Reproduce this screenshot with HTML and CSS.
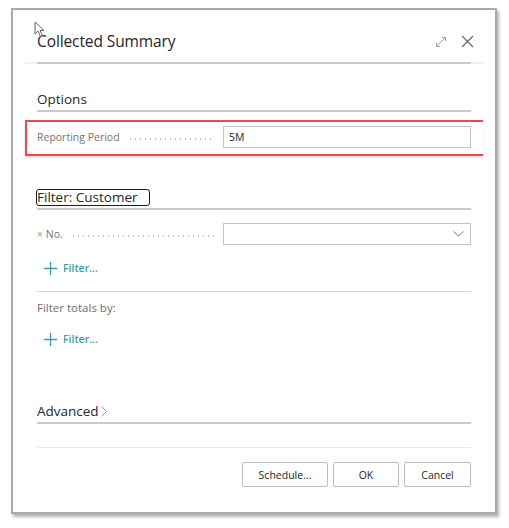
FILE: index.html
```html
<!DOCTYPE html>
<html lang="en">
<head>
<meta charset="utf-8">
<title>Collected Summary</title>
<link rel="stylesheet" href="styles.css">
</head>
<body>
<div class="dialog">
  <svg class="cursor" width="12" height="17" viewBox="0 0 12 17"><path d="M1 1 L1 13 L4 10 L6.5 15.5 L8.5 14.5 L6 9.5 L10 9.5 Z" fill="#fff" stroke="#666" stroke-width="1"/></svg>
  <div class="header">
    <h1 class="title">Collected Summary</h1>
    <div class="header-icons">
      <svg class="icon-expand" width="12" height="12" viewBox="0 0 12 12"><path d="M1.5 10.5 L10.5 1.5 M7 1.5 H10.5 V5 M1.5 7 V10.5 H5" fill="none" stroke="#a0a0a0" stroke-width="1"/></svg>
      <svg class="icon-close" width="13" height="13" viewBox="0 0 13 13"><path d="M1 1 L12 12 M12 1 L1 12" fill="none" stroke="#666" stroke-width="1.2"/></svg>
    </div>
  </div>
  <div class="header-rule"><div class="header-rule-inner"></div></div>

  <div class="content">
    <div class="section-head">Options</div>
    <div class="highlight">
      <div class="field-row">
        <div class="field-label"><span>Reporting Period</span><span class="leader"></span></div>
        <div class="input"><span class="input-value">5M</span></div>
      </div>
    </div>

    <div class="section-head section-filter"><span class="focus-box">Filter: Customer</span></div>
    <div class="field-row row-no">
      <div class="field-label"><span><span class="x-mark">×</span> No.</span><span class="leader"></span></div>
      <div class="input input-select">
        <svg class="chevron" width="11" height="6" viewBox="0 0 11 6"><path d="M0.5 0.5 L5.5 5 L10.5 0.5" fill="none" stroke="#777" stroke-width="1"/></svg>
      </div>
    </div>
    <div class="add-filter filter-1">
      <svg width="13" height="13" viewBox="0 0 13 13"><path d="M6.5 0 V13 M0 6.5 H13" stroke="#3a9e9e" stroke-width="1.3"/></svg>
      <span>Filter...</span>
    </div>
    <div class="sep"></div>
    <div class="totals-label">Filter totals by:</div>
    <div class="add-filter filter-2">
      <svg width="13" height="13" viewBox="0 0 13 13"><path d="M6.5 0 V13 M0 6.5 H13" stroke="#3a9e9e" stroke-width="1.3"/></svg>
      <span>Filter...</span>
    </div>

    <div class="section-head section-advanced">Advanced<svg class="adv-chevron" width="6" height="11" viewBox="0 0 6 11"><path d="M0.5 0.5 L5.5 5.5 L0.5 10.5" fill="none" stroke="#9a9a9a" stroke-width="1"/></svg></div>
    <div class="sep sep-light"></div>

    <div class="buttons">
      <button class="btn btn-schedule">Schedule...</button>
      <button class="btn btn-ok">OK</button>
      <button class="btn btn-cancel">Cancel</button>
    </div>
  </div>
</div>
</body>
</html>
```

FILE: styles.css
```css
* { box-sizing: border-box; }
html, body { margin: 0; padding: 0; background: #fff; }
body {
  width: 509px;
  height: 528px;
  overflow: hidden;
  font-family: "Open Sans", "Noto Sans", sans-serif;
  color: #212121;
}
.dialog {
  position: relative;
  margin: 8px 0 0 11px;
  width: 486px;
  border: 2px solid #a9a9a9;
  background: #fff;
  box-shadow: 2px 3px 3px rgba(0,0,0,0.3);
  padding-bottom: 25px;
}
.cursor { position: absolute; left: 21px; top: 11px; }
.header {
  display: flex;
  align-items: center;
  justify-content: space-between;
  padding: 20px 21px 0 24px;
  height: 42px;
}
.title {
  margin: 0;
  font-size: 15.5px;
  font-weight: 400;
  line-height: 22px;
  color: #262626;
  letter-spacing: -0.1px;
}
.header-icons { display: flex; align-items: center; gap: 14px; margin-top: 1px; }
.header-rule {
  margin: 10px 12px 0 12px;
  height: 2px;
  background: #efefef;
  padding: 0 12px;
}
.header-rule-inner { height: 2px; background: #c6c9cf; }
.content { padding: 0 24px; }
.section-head {
  font-size: 13.5px;
  line-height: 22px;
  color: #262626;
  border-bottom: 2px solid #c6c9cf;
  margin-top: 24px;
}
.highlight {
  margin: 8px -12px 0 -12px;
  border: 2px solid #ec4a4f;
  border-right: none;
  padding: 4px 12px 6px 10px;
  box-shadow: 0 2px 2px rgba(0,0,0,0.12);
}
.field-row { display: flex; align-items: center; }
.field-label {
  width: 186px;
  display: flex;
  align-items: center;
  font-size: 10.5px;
  color: #737373;
  white-space: nowrap;
}
.leader {
  flex: 1;
  height: 2px;
  margin: 4px 8px 0 8px;
  background-image: radial-gradient(circle, #bdbdbd 0.8px, transparent 1px);
  background-size: 5px 2px;
  background-repeat: repeat-x;
}
.input {
  flex: 1;
  height: 22px;
  border: 1px solid #c2c5ca;
  display: flex;
  align-items: center;
  padding-left: 5px;
}
.input-value { font-size: 10.5px; color: #222; }
.section-filter { margin-top: 30px; }
.focus-box {
  display: inline-block;
  border: 1.5px solid #1e1e1e;
  border-radius: 3px;
  line-height: 15px;
  padding: 0 10px 0 0;
  margin-left: -1px;
  width: 114px;
}
.row-no { margin-top: 13px; }
.x-mark { color: #9a9a9a; }
.input-select { justify-content: flex-end; padding-right: 6px; }
.add-filter {
  display: flex;
  align-items: center;
  height: 20px;
  padding-left: 7px;
  gap: 6px;
  font-size: 10.5px;
  font-weight: 600;
  color: #3a9e9e;
}
.filter-1 { margin-top: 13px; }
.sep { margin-top: 13px; height: 1px; background: #d5d7db; }
.totals-label {
  margin-top: 7px;
  font-size: 11.5px;
  line-height: 18px;
  color: #6e6e6e;
}
.filter-2 { margin-top: 12px; }
.section-advanced { margin-top: 51px; display: flex; align-items: center; }
.adv-chevron { margin-left: 2px; margin-top: 1px; }
.sep-light { margin-top: 23px; background: #e8e8e8; }
.buttons {
  display: flex;
  justify-content: flex-end;
  gap: 5px;
  margin-top: 14px;
}
.btn {
  height: 25px;
  border: 1px solid #bcbcbc;
  border-radius: 2px;
  background: #fff;
  font-family: "Open Sans", "Noto Sans", sans-serif;
  font-size: 10.5px;
  color: #262626;
  padding: 0;
}
.btn-schedule { width: 86px; }
.btn-ok { width: 66px; }
.btn-cancel { width: 67px; }
```
